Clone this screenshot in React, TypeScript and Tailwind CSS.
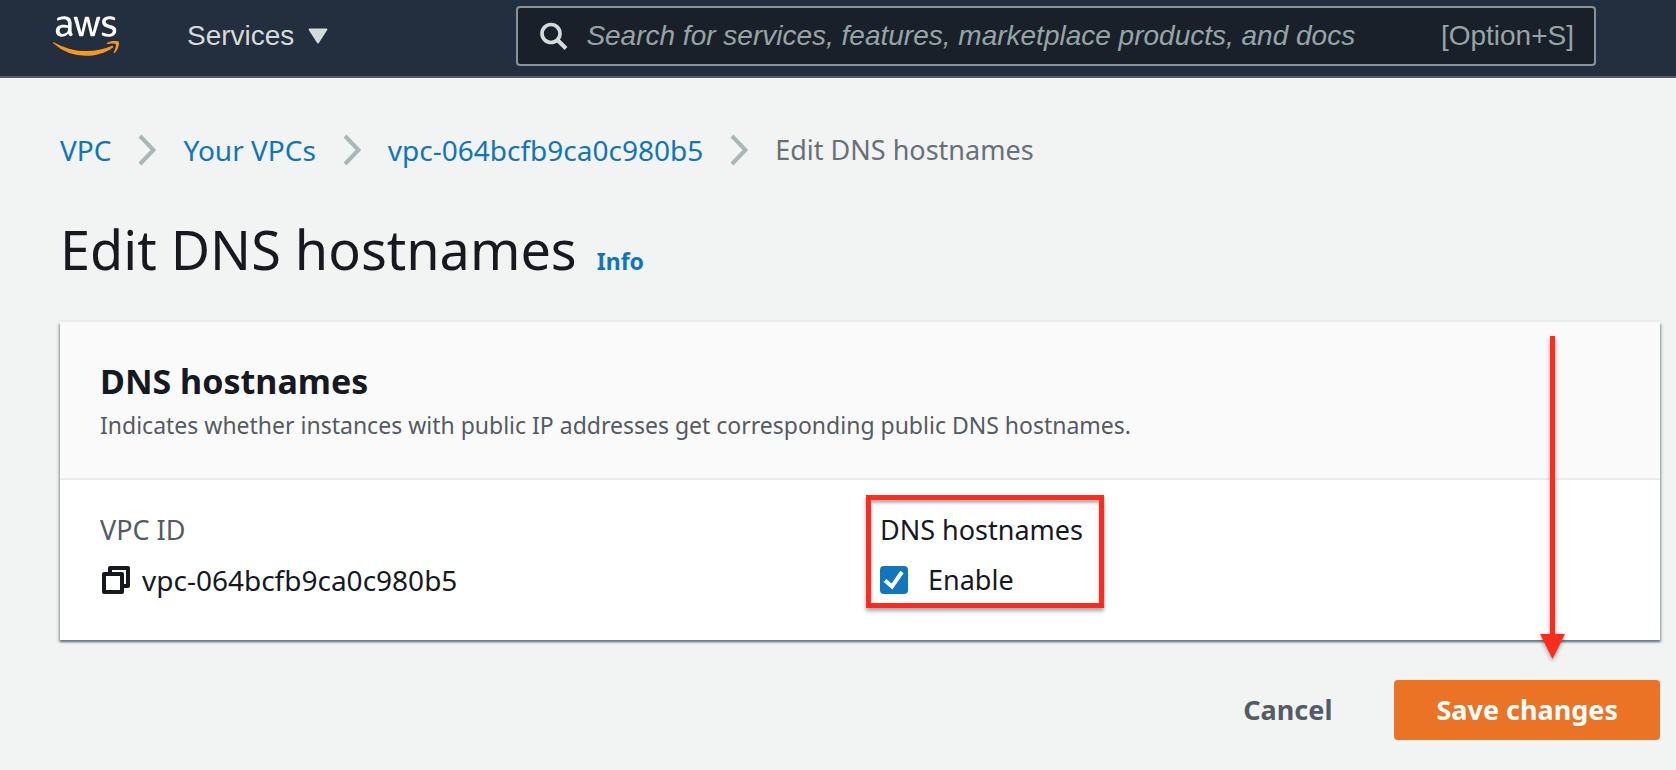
import { FaAws } from "react-icons/fa";

function Chevron() {
  return (
    <svg aria-hidden="true" viewBox="0 0 18 32" className="h-8 w-[18px] shrink-0">
      <path d="M2 2 L15.5 16 L2 30" fill="none" stroke="#aab7b8" strokeWidth="4" />
    </svg>
  );
}

function AwsLogo() {
  return (
    <a href="#home" aria-label="AWS" className="block shrink-0">
      <svg aria-hidden="true" className="absolute h-0 w-0">
        <defs>
          <linearGradient id="aws-fill" gradientUnits="userSpaceOnUse" x1="0" y1="0" x2="0" y2="512">
            <stop offset="0.57" stopColor="#ffffff" />
            <stop offset="0.57" stopColor="#f7981d" />
          </linearGradient>
        </defs>
      </svg>
      <FaAws className="h-[54px] w-[66px] [fill:url(#aws-fill)]" />
    </a>
  );
}

function TopBar() {
  return (
    <header className="flex h-[78px] items-start border-b-2 border-[#545b64] bg-[#232f3e] pr-20 pl-[53px] font-['Liberation_Sans',Arial,sans-serif] text-[28px] leading-[60px]">
      <div className="pt-[9px]">
        <AwsLogo />
      </div>
      <button type="button" className="mt-[6px] ml-[68px] flex shrink-0 items-center gap-[14px] text-[#d5dbdb]">
        Services
        <svg aria-hidden="true" viewBox="0 0 20 16" className="h-4 w-5">
          <path d="M1.6 1.5 H18.4 L10 14.5 Z" fill="#d5dbdb" stroke="#d5dbdb" strokeWidth="2" strokeLinejoin="round" />
        </svg>
      </button>
      <label className="mt-[6px] ml-[188px] flex h-[60px] min-w-0 flex-1 items-center rounded border-2 border-[#879596] bg-[#1a2029] pr-5 pl-[22px]">
        <svg aria-hidden="true" viewBox="0 0 28 28" className="h-7 w-7 shrink-0">
          <circle cx="11" cy="11.5" r="9" fill="none" stroke="#d5dbdb" strokeWidth="3.6" />
          <path d="M17.5 18 L26 26.5" stroke="#d5dbdb" strokeWidth="4" />
        </svg>
        <input
          type="text"
          aria-label="Search"
          placeholder="Search for services, features, marketplace products, and docs"
          className="ml-[18px] h-full min-w-0 flex-1 bg-transparent italic outline-none placeholder:text-[#95a5a6]"
        />
        <span className="shrink-0 text-[#95a5a6]">[Option+S]</span>
      </label>
    </header>
  );
}

function Breadcrumbs() {
  return (
    <nav aria-label="Breadcrumb">
      <ol className="flex items-center gap-[27px] text-[28px] leading-9 text-[#0f76bd]">
        <li><a href="#vpc">VPC</a></li>
        <li aria-hidden="true"><Chevron /></li>
        <li><a href="#vpcs">Your VPCs</a></li>
        <li aria-hidden="true"><Chevron /></li>
        <li><a href="#vpc-id">vpc-064bcfb9ca0c980b5</a></li>
        <li aria-hidden="true"><Chevron /></li>
        <li aria-current="page" className="text-[27px] text-[#687078]">Edit DNS hostnames</li>
      </ol>
    </nav>
  );
}

export default function App() {
  return (
    <div className="min-h-screen bg-[#f2f3f3] font-['Noto_Sans',sans-serif] text-[#16191f]">
      <TopBar />
      <main className="relative pt-[54px] pr-4 pb-[30px] pl-[60px]">
        <Breadcrumbs />
        <div className="mt-[45px] flex items-baseline gap-5">
          <h1 className="text-[54px] leading-[72px]">Edit DNS hostnames</h1>
          <a href="#info" className="text-[23px] font-bold text-[#0f76bd]">Info</a>
        </div>

        <section className="mt-[37px] bg-white shadow-[0_-2px_0_0_#eaeded,0_2px_2px_0_#687b80,2px_2px_2px_0_#c3cccd,-2px_2px_2px_0_#c3cccd]">
          <div className="h-[158px] border-b-2 border-[#eaeded] bg-[#fafafa] px-10 pt-[35px]">
            <h2 className="text-[34px] leading-[48px] font-bold">DNS hostnames</h2>
            <p className="text-[23px] leading-10 text-[#545b64]">
              Indicates whether instances with public IP addresses get corresponding public DNS hostnames.
            </p>
          </div>
          <div className="grid grid-cols-2 px-10 pt-[30px] pb-10 text-[28px] leading-10">
            <div>
              <div className="text-[27px] text-[#545b64]">VPC ID</div>
              <div className="mt-[10px] flex items-center gap-3">
                <button type="button" aria-label="Copy VPC ID" className="ml-0.5">
                  <svg aria-hidden="true" viewBox="0 0 28 28" className="block h-7 w-7">
                    <path d="M8 7 V2 H26 V20 H21" fill="none" stroke="#16191f" strokeWidth="4" strokeLinejoin="round" />
                    <rect x="2" y="8" width="18" height="18" fill="#ffffff" stroke="#16191f" strokeWidth="4" strokeLinejoin="round" />
                  </svg>
                </button>
                <span>vpc-064bcfb9ca0c980b5</span>
              </div>
            </div>
            <fieldset className="relative pl-5 text-[27px]">
              <div>DNS hostnames</div>
              <label className="mt-[10px] flex items-center gap-5">
                <input
                  type="checkbox"
                  defaultChecked
                  className="peer h-7 w-7 shrink-0 appearance-none rounded border-2 border-[#687078] bg-white checked:border-[#1176bb] checked:bg-[#1176bb]"
                />
                <svg
                  aria-hidden="true"
                  viewBox="0 0 28 28"
                  className="pointer-events-none absolute left-5 hidden h-7 w-7 peer-checked:block"
                >
                  <path d="M5 14.5 L12 20.5 L22 6" fill="none" stroke="#ffffff" strokeWidth="4" />
                </svg>
                Enable
              </label>
              <div className="pointer-events-none absolute -top-[15px] left-[6px] h-[113px] w-[238px] border-5 border-[#ff2b1c] shadow-[0_3px_4px_rgba(0,0,0,0.35),inset_0_3px_3px_rgba(0,0,0,0.3)]" />
            </fieldset>
          </div>
        </section>

        <div className="mt-10 flex justify-end text-[27px] leading-[60px] font-bold">
          <button type="button" className="px-[62px] text-[#545b64]">Cancel</button>
          <button type="button" className="rounded bg-[#ea7326] px-[42px] text-white">Save changes</button>
        </div>

        <svg
          aria-hidden="true"
          viewBox="0 0 34 332"
          className="pointer-events-none absolute top-[258px] right-[106px] h-[332px] w-[34px] drop-shadow-[0_2px_2px_rgba(0,0,0,0.35)]"
        >
          <path d="M14 0 H19 V298 H29 L16.5 323 L4 298 H14 Z" fill="#ff2b1c" />
        </svg>
      </main>
    </div>
  );
}
